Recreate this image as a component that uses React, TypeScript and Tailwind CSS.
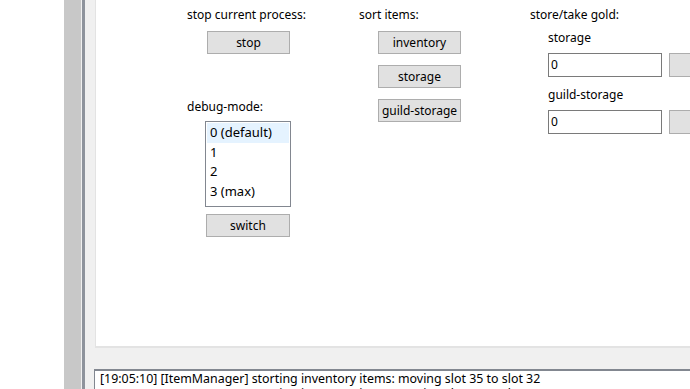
import React from 'react';

const font = { fontFamily: '"Noto Sans", "Liberation Sans", sans-serif' };

function WinButton({ label, className }: { label: string; className: string }) {
  return (
    <div
      className={`flex items-center justify-center bg-[#e1e1e1] border border-[#adadad] text-[12px] text-black ${className}`}
    >
      {label}
    </div>
  );
}

function GoldRow({ label }: { label: string }) {
  return (
    <div className="flex flex-col">
      <div className="ml-[18px] h-[16px] leading-[16px] text-[12px]">{label}</div>
      <div className="flex mt-[7px] ml-[18px] gap-[7px]">
        <div className="w-[114px] h-[24px] bg-white border border-[#7a7a7a] pl-[2px] text-[12px] leading-[22px]">0</div>
        <div className="w-[84px] h-[24px] bg-[#e1e1e1] border border-[#adadad]" />
      </div>
    </div>
  );
}

export default function App() {
  const debugModes = ['0 (default)', '1', '2', '3 (max)'];

  return (
    <div className="w-[690px] h-[389px] overflow-hidden flex bg-[#f0f0f0] text-black" style={font}>
      {/* left edge */}
      <div className="w-[64px] shrink-0 bg-white" />
      <div className="w-[17px] shrink-0 bg-[#c8c8c8]" />
      <div className="w-[1px] shrink-0 bg-[#f0f0f0]" />
      <div className="w-[3px] shrink-0 bg-[#8e939c]" />

      <div className="flex-1 flex flex-col pl-[10px]">
        {/* tab page */}
        <div className="h-[348px] shrink-0 bg-white border-l border-b-2 border-[#e3e3e3] flex pt-[7px] pl-[91px]">
          {/* column 1 */}
          <div className="w-[172px] shrink-0 flex flex-col">
            <div className="h-[16px] leading-[16px] text-[12px]">stop current process:</div>
            <WinButton label="stop" className="mt-[8px] ml-[20px] w-[83px] h-[23px]" />
            <div className="mt-[45px] h-[16px] leading-[16px] text-[12px]">debug-mode:</div>
            <div className="mt-[6px] ml-[18px] w-[86px] h-[86px] bg-white border border-[#828790] p-[1px]">
              {debugModes.map((m, i) => (
                <div
                  key={m}
                  className={`h-[19.5px] leading-[19.5px] pl-[3px] text-[13px] ${i === 0 ? 'bg-[#e5f3ff]' : ''}`}
                >
                  {m}
                </div>
              ))}
            </div>
            <WinButton label="switch" className="mt-[7px] ml-[19px] w-[84px] h-[23px]" />
          </div>

          {/* column 2 */}
          <div className="w-[171px] shrink-0 flex flex-col">
            <div className="h-[16px] leading-[16px] text-[12px]">sort items:</div>
            <div className="flex flex-col gap-[11px] mt-[8px] ml-[19px]">
              <WinButton label="inventory" className="w-[83px] h-[23px]" />
              <WinButton label="storage" className="w-[83px] h-[23px]" />
              <WinButton label="guild-storage" className="w-[83px] h-[23px]" />
            </div>
          </div>

          {/* column 3 */}
          <div className="flex flex-col">
            <div className="h-[16px] leading-[16px] text-[12px]">store/take gold:</div>
            <div className="mt-[7px] flex flex-col gap-[10px]">
              <GoldRow label="storage" />
              <GoldRow label="guild-storage" />
            </div>
          </div>
        </div>

        {/* log output */}
        <div className="mt-[21px] -ml-[1px] flex-1 bg-white border-t-2 border-l border-[#828790] pl-[5px] overflow-hidden text-[12.4px] leading-[15px] whitespace-nowrap">
          <div>[19:05:10] [ItemManager] storting inventory items: moving slot 35 to slot 32</div>
          <div>[19:05:10] [ItemManager] storting inventory items: moving slot 34 to slot 31</div>
        </div>
      </div>
    </div>
  );
}
